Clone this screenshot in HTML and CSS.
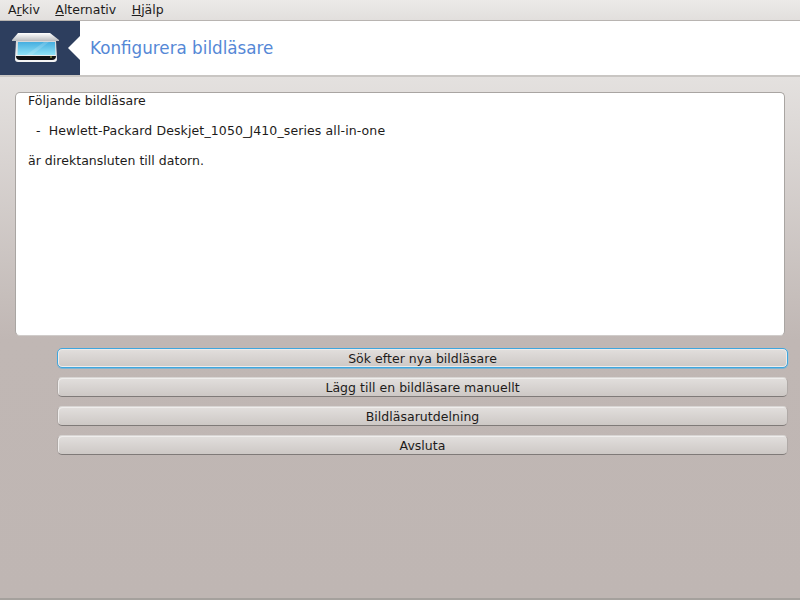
FILE: index.html
```html
<!DOCTYPE html>
<html lang="sv">
<head>
<meta charset="utf-8">
<title>Konfigurera bildläsare</title>
<link rel="stylesheet" href="styles.css">
</head>
<body>
<div class="window">
  <nav class="menubar">
    <span class="menu">A<u>r</u>kiv</span>
    <span class="menu"><u>A</u>lternativ</span>
    <span class="menu"><u>H</u>jälp</span>
  </nav>
  <header class="banner">
    <div class="logo">
      <svg class="scanner" width="48" height="32" viewBox="0 0 48 32" aria-hidden="true">
        <defs>
          <linearGradient id="lid" x1="0" y1="0" x2="0" y2="1"><stop offset="0" stop-color="#ffffff"/><stop offset="1" stop-color="#b9bbbf"/></linearGradient>
          <linearGradient id="glass" x1="0" y1="0" x2="0" y2="1"><stop offset="0" stop-color="#45aee0"/><stop offset="1" stop-color="#8fe2f6"/></linearGradient>
          <linearGradient id="body" x1="0" y1="0" x2="0" y2="1"><stop offset="0" stop-color="#d4d7da"/><stop offset="1" stop-color="#f6f6f6"/></linearGradient>
        </defs>
        <path d="M4 9 H44 L45 27 Q45 30 42 30 H6 Q3 30 3 27 Z" fill="url(#body)"/>
        <path d="M6 10 H43 L43.500 23 H5.500 Z" fill="url(#glass)"/>
        <path d="M14 23 L32 10 H37 L20 23 Z" fill="#ffffff" fill-opacity=".16"/>
        <path d="M6 1 H38 L47 8 V9 H0 V8 Z" fill="url(#lid)"/>
        <path d="M4 24 H44 Q44 28 40 28 H8 Q4 28 4 24 Z" fill="#111214"/>
        <rect x="38" y="24.500" width="2" height="1" fill="#b7c24a"/>
      </svg>
    </div>
    <div class="title-area">
      <h1 class="title">Konfigurera bildläsare</h1>
    </div>
  </header>
  <main class="content">
    <section class="textbox">
      <p class="line">Följande bildläsare</p>
      <p class="line indent">-&nbsp; Hewlett-Packard Deskjet_1050_J410_series all-in-one</p>
      <p class="line">är direktansluten till datorn.</p>
    </section>
    <div class="actions">
      <button class="btn focused" type="button">Sök efter nya bildläsare</button>
      <button class="btn" type="button">Lägg till en bildläsare manuellt</button>
      <button class="btn" type="button">Bildläsarutdelning</button>
      <button class="btn" type="button">Avsluta</button>
    </div>
  </main>
</div>
</body>
</html>
```
FILE: styles.css
```css
* { box-sizing: border-box; }
html, body { margin: 0; height: 100%; }
body {
  font-family: "DejaVu Sans", sans-serif;
  font-size: 12.5px;
  color: #1d1b1a;
}
.window {
  width: 800px;
  height: 600px;
  overflow: hidden;
  display: flex;
  flex-direction: column;
  background: linear-gradient(#e6e3e1 0, #e4e1df 76px, #c0b7b4 340px, #bfb6b3 100%);
  border-bottom: 2px solid #a5a19d;
}
.menubar {
  height: 20px;
  display: flex;
  align-items: center;
  gap: 15.5px;
  padding: 0 8px;
  background: linear-gradient(#eceae8, #e2dfdd);
}
.menu { line-height: 20px; }
.banner {
  height: 57px;
  display: flex;
  border-top: 1px solid #b8b4b1;
  border-bottom: 2px solid #c9c6c3;
  background: #fff;
}
.logo {
  width: 80px;
  background: #2d3e5e;
  display: flex;
  align-items: center;
  padding-left: 12px;
  position: relative;
}
.logo::after {
  content: "";
  position: absolute;
  right: 0;
  top: 15px;
  border: 12px solid transparent;
  border-right-color: #fff;
  border-left-width: 0;
}
.title-area {
  flex: 1;
  display: flex;
  align-items: center;
  padding: 0 0 1px 10px;
}
.title {
  margin: 0;
  font-size: 16.75px;
  font-weight: 400;
  color: #5588d6;
}
.content {
  flex: 1;
  display: flex;
  flex-direction: column;
  padding: 15px 12px 0 15px;
}
.textbox {
  width: 770px;
  height: 244px;
  padding: 0 12px;
  background: #fff;
  border: 1px solid #a9a5a2;
  border-bottom-color: #d0ccca;
  border-radius: 5px;
}
.line {
  margin: 0 0 15px;
  line-height: 15px;
  letter-spacing: .03px;
}
.indent { padding-left: 8px; letter-spacing: .115px; }
.actions {
  display: flex;
  flex-direction: column;
  gap: 9px;
  margin: 12px 0 0 42px;
}
.btn {
  height: 20px;
  padding: 0;
  font: inherit;
  color: inherit;
  text-align: center;
  letter-spacing: .03px;
  background: linear-gradient(#e2dfdd, #cdc8c5);
  border: 1px solid #b0aaa7;
  border-top-color: #d8d5d3;
  border-bottom-color: #7f7a78;
  border-radius: 5px;
  box-shadow: inset 1px 1px 0 #efedec;
}
.focused {
  border: 1px solid #3fa6de;
  box-shadow: 0 1px 0 #7db4d2, 1px 0 0 #a9bfcb, inset 0 0 0 1px #eeecea;
}
```
